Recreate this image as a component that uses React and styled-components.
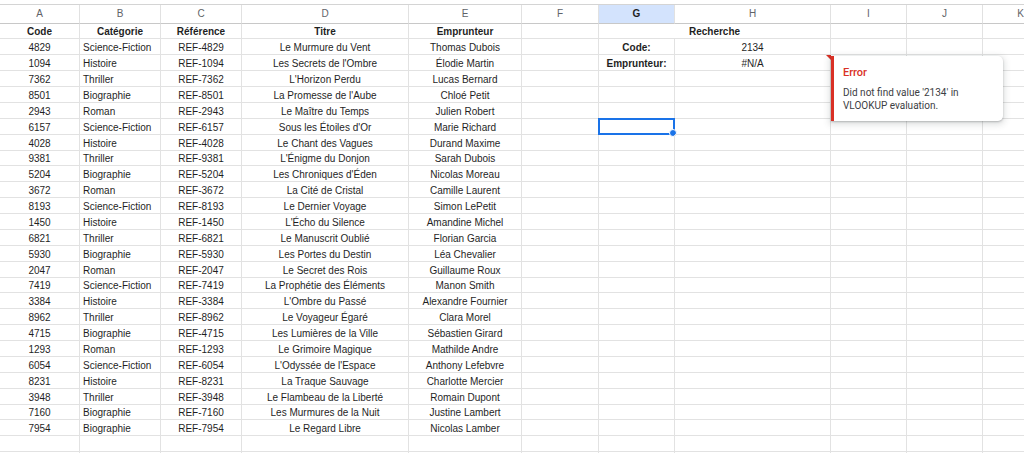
import React from "react";
import styled, { createGlobalStyle } from "styled-components";

const Global = createGlobalStyle`
  html, body { margin: 0; padding: 0; background: #fff; }
  body { font-family: "Liberation Sans", Arial, sans-serif; overflow: hidden; }
  * { box-sizing: border-box; }
`;

const COLS = [80, 81, 81, 167, 113, 77, 76, 156, 76, 76, 76];
const LETTERS = ["A", "B", "C", "D", "E", "F", "G", "H", "I", "J", "K"];
const ROW_H = 15.88;

const rows = [
  [4829, "Science-Fiction", "REF-4829", "Le Murmure du Vent", "Thomas Dubois"],
  [1094, "Histoire", "REF-1094", "Les Secrets de l'Ombre", "Élodie Martin"],
  [7362, "Thriller", "REF-7362", "L'Horizon Perdu", "Lucas Bernard"],
  [8501, "Biographie", "REF-8501", "La Promesse de l'Aube", "Chloé Petit"],
  [2943, "Roman", "REF-2943", "Le Maître du Temps", "Julien Robert"],
  [6157, "Science-Fiction", "REF-6157", "Sous les Étoiles d'Or", "Marie Richard"],
  [4028, "Histoire", "REF-4028", "Le Chant des Vagues", "Durand Maxime"],
  [9381, "Thriller", "REF-9381", "L'Énigme du Donjon", "Sarah Dubois"],
  [5204, "Biographie", "REF-5204", "Les Chroniques d'Éden", "Nicolas Moreau"],
  [3672, "Roman", "REF-3672", "La Cité de Cristal", "Camille Laurent"],
  [8193, "Science-Fiction", "REF-8193", "Le Dernier Voyage", "Simon LePetit"],
  [1450, "Histoire", "REF-1450", "L'Écho du Silence", "Amandine Michel"],
  [6821, "Thriller", "REF-6821", "Le Manuscrit Oublié", "Florian Garcia"],
  [5930, "Biographie", "REF-5930", "Les Portes du Destin", "Léa Chevalier"],
  [2047, "Roman", "REF-2047", "Le Secret des Rois", "Guillaume Roux"],
  [7419, "Science-Fiction", "REF-7419", "La Prophétie des Éléments", "Manon Smith"],
  [3384, "Histoire", "REF-3384", "L'Ombre du Passé", "Alexandre Fournier"],
  [8962, "Thriller", "REF-8962", "Le Voyageur Égaré", "Clara Morel"],
  [4715, "Biographie", "REF-4715", "Les Lumières de la Ville", "Sébastien Girard"],
  [1293, "Roman", "REF-1293", "Le Grimoire Magique", "Mathilde Andre"],
  [6054, "Science-Fiction", "REF-6054", "L'Odyssée de l'Espace", "Anthony Lefebvre"],
  [8231, "Histoire", "REF-8231", "La Traque Sauvage", "Charlotte Mercier"],
  [3948, "Thriller", "REF-3948", "Le Flambeau de la Liberté", "Romain Dupont"],
  [7160, "Biographie", "REF-7160", "Les Murmures de la Nuit", "Justine Lambert"],
  [7954, "Biographie", "REF-7954", "Le Regard Libre", "Nicolas Lamber"],
];

const Page = styled.div`
  width: 1024px;
  height: 453px;
  overflow: hidden;
  display: flex;
  flex-direction: column;
`;

const TopStrip = styled.div`
  height: 5px;
  flex: none;
  border-bottom: 1px solid #d4d4d4;
`;

const Sheet = styled.div`
  position: relative;
  display: grid;
  grid-template-columns: ${COLS.map((c) => c + "px").join(" ")};
  grid-template-rows: 18.5px;
  grid-auto-rows: ${ROW_H}px;
  width: max-content;
`;

const ColHeader = styled.div`
  display: flex;
  align-items: center;
  justify-content: center;
  font-size: 10px;
  color: ${(p) => (p.$active ? "#1f1f1f" : "#5f6368")};
  font-weight: ${(p) => (p.$active ? 700 : 400)};
  background: ${(p) => (p.$active ? "#d3e3fd" : "#fff")};
  border-right: 1px solid #e1e1e1;
  border-bottom: 1px solid #c8c8c8;
`;

const Cell = styled.div`
  position: relative;
  display: flex;
  align-items: center;
  justify-content: ${(p) => (p.$align === "left" ? "flex-start" : "center")};
  padding: 2px 3px 0;
  font-size: 10px;
  font-weight: ${(p) => (p.$bold ? 700 : 400)};
  color: #1f1f1f;
  white-space: nowrap;
  overflow: visible;
  border-right: 1px solid #e2e2e2;
  border-bottom: 1px solid #e2e2e2;
  grid-column: ${(p) => (p.$span ? `span ${p.$span}` : "auto")};
`;

const ErrorMark = styled.span`
  position: absolute;
  top: 0;
  right: -1px;
  width: 0;
  height: 0;
  border-top: 5px solid #d93025;
  border-left: 5px solid transparent;
`;

const Selection = styled.span`
  position: absolute;
  left: -1px;
  top: -1px;
  right: -1px;
  bottom: -1px;
  border: 2px solid #1a73e8;
  pointer-events: none;
`;

const FillHandle = styled.span`
  position: absolute;
  right: -4px;
  bottom: -4px;
  width: 6px;
  height: 6px;
  border-radius: 50%;
  background: #1a73e8;
  border: 1px solid #fff;
  box-sizing: content-box;
`;

const ErrorPopup = styled.div`
  position: absolute;
  left: 831px;
  top: 51px;
  width: 172px;
  height: 65px;
  background: #fff;
  border-left: 3px solid #d93025;
  border-radius: 0 5px 5px 0;
  box-shadow: 0 1px 2px rgba(60, 64, 67, 0.3), 0 2px 6px 2px rgba(60, 64, 67, 0.15);
  padding: 10px 12px 0 9px;
  font-family: Roboto, "Liberation Sans", Arial, sans-serif;
  z-index: 5;
`;

const ErrorTitle = styled.div`
  color: #d93025;
  font-size: 11px;
  font-weight: 500;
  line-height: 14px;
  margin-bottom: 6px;
`;

const ErrorBody = styled.div`
  color: #3c4043;
  font-size: 10px;
  line-height: 13px;
`;

const sideCells = {
  0: [{ text: "Code:", bold: true }, { text: "2134" }],
  1: [{ text: "Emprunteur:", bold: true }, { text: "#N/A", error: true }],
};

export default function App() {
  const extra = 2;
  return (
    <Page>
      <Global />
      <TopStrip />
      <Sheet>
        {LETTERS.map((l) => (
          <ColHeader key={l} $active={l === "G"}>
            {l}
          </ColHeader>
        ))}

        {["Code", "Catégorie", "Référence", "Titre", "Emprunteur", ""].map((h, i) => (
          <Cell key={"h" + i} $bold>
            {h}
          </Cell>
        ))}
        <Cell $bold $span={2}>Recherche</Cell>
        <Cell />
        <Cell />
        <Cell />

        {rows.map((r, i) => {
          const side = sideCells[i];
          return (
            <React.Fragment key={r[0]}>
              <Cell>{r[0]}</Cell>
              <Cell $align="left">{r[1]}</Cell>
              <Cell>{r[2]}</Cell>
              <Cell>{r[3]}</Cell>
              <Cell>{r[4]}</Cell>
              <Cell />
              <Cell $bold={side && side[0].bold}>
                {side ? side[0].text : ""}
                {i === 5 && (
                  <Selection>
                    <FillHandle />
                  </Selection>
                )}
              </Cell>
              <Cell>
                {side ? side[1].text : ""}
                {side && side[1].error && <ErrorMark />}
              </Cell>
              <Cell />
              <Cell />
              <Cell />
            </React.Fragment>
          );
        })}

        {Array.from({ length: extra * COLS.length }).map((_, i) => (
          <Cell key={"e" + i} />
        ))}

        <ErrorPopup>
          <ErrorTitle>Error</ErrorTitle>
          <ErrorBody>
            Did not find value '2134' in
            <br />
            VLOOKUP evaluation.
          </ErrorBody>
        </ErrorPopup>
      </Sheet>
    </Page>
  );
}
